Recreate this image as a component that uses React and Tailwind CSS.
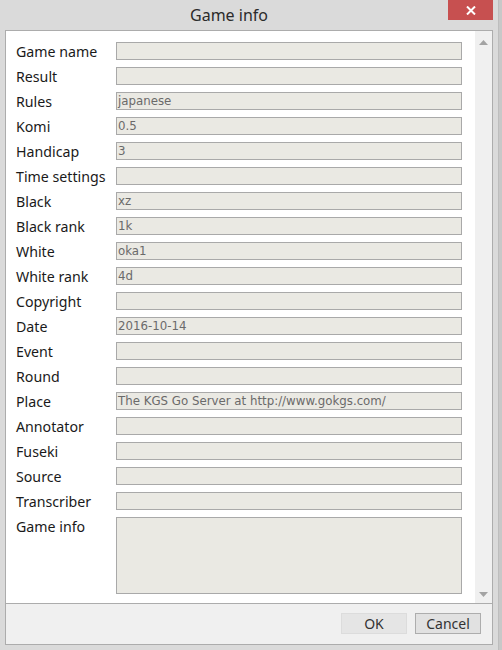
const fields = [
  ['Game name', ''],
  ['Result', ''],
  ['Rules', 'japanese'],
  ['Komi', '0.5'],
  ['Handicap', '3'],
  ['Time settings', ''],
  ['Black', 'xz'],
  ['Black rank', '1k'],
  ['White', 'oka1'],
  ['White rank', '4d'],
  ['Copyright', ''],
  ['Date', '2016-10-14'],
  ['Event', ''],
  ['Round', ''],
  ['Place', 'The KGS Go Server at http://www.gokgs.com/'],
  ['Annotator', ''],
  ['Fuseki', ''],
  ['Source', ''],
  ['Transcriber', ''],
];

const uiFont = { fontFamily: '"Noto Sans", "Open Sans", sans-serif' };

function Field({ label, value }) {
  return (
    <div className="flex items-center h-[18px]">
      <div className="w-[100px] pt-[2px] text-[14.2px] leading-[18px] text-[#1a1a1a] whitespace-nowrap">{label}</div>
      <div className="w-[346px] h-[18px] bg-[#eae9e3] border border-[#a9a9a9] pl-px text-[11.8px] leading-[16px] text-[#6a6a6a] font-['DejaVu_Sans',sans-serif] overflow-hidden whitespace-nowrap">
        {value}
      </div>
    </div>
  );
}

export default function App() {
  return (
    <div className="w-[502px] h-[650px] flex bg-[#dadada]" style={uiFont}>
      <div className="w-[498px] h-[650px] flex flex-col">
        {/* title bar */}
        <div className="h-[30px] flex items-start">
          <div className="flex-1 pl-[10px] h-[30px] flex items-center justify-center text-[16px] text-[#2b2b2b]">
            Game info
          </div>
          <div className="w-[45px] h-[20px] bg-[#c75050] flex items-center justify-center">
            <svg width="10" height="9" viewBox="0 0 10 9">
              <path d="M1 0.5 L9 8.5 M9 0.5 L1 8.5" stroke="#ffffff" strokeWidth="2" />
            </svg>
          </div>
          <div className="w-[5px]" />
        </div>

        {/* panel */}
        <div className="ml-[5px] w-[488px] h-[615px] border border-[#acacac] flex flex-col">
          <div className="h-[572px] flex">
            <div className="w-[469px] bg-white pl-[10px] pt-[11px] flex flex-col gap-[7px]">
              {fields.map(([label, value]) => (
                <Field key={label} label={label} value={value} />
              ))}
              <div className="flex items-start">
                <div className="w-[100px] pt-px text-[14.2px] leading-[18px] text-[#1a1a1a]">Game info</div>
                <div className="w-[346px] h-[77px] bg-[#eae9e3] border border-[#a9a9a9]" />
              </div>
            </div>
            <div className="w-[17px] bg-[#f0f0f0] flex flex-col items-center justify-between pt-[9px] pb-[6px]">
              <svg width="9" height="5" viewBox="0 0 9 5"><path d="M4.5 0 L9 5 L0 5 Z" fill="#a3a3a3" /></svg>
              <svg width="9" height="5" viewBox="0 0 9 5"><path d="M0 0 L9 0 L4.5 5 Z" fill="#a3a3a3" /></svg>
            </div>
          </div>
          <div className="h-px bg-[#acacac]" />
          <div className="flex-1 bg-[#f0f0f0] flex justify-end items-start pt-[9px] pr-[11px] gap-[8px]">
            <button className="w-[66px] h-[21px] bg-[#e5e5e5] border border-[#dcdcdc] text-[14px] leading-[19px] text-[#333333]">OK</button>
            <button className="w-[66px] h-[21px] bg-[#e1e1e1] border border-[#adadad] text-[14px] leading-[19px] text-[#333333]">Cancel</button>
          </div>
        </div>
      </div>
      <div className="w-[4px] h-[650px] flex">
        <div className="w-px bg-[#bdbdbd]" />
        <div className="flex-1 bg-[#c8c8c8]" />
      </div>
    </div>
  );
}
